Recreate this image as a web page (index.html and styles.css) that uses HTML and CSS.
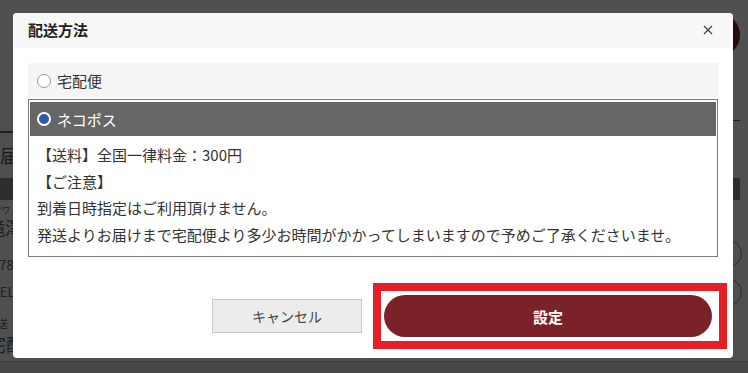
FILE: index.html
```html
<!DOCTYPE html>
<html lang="ja">
<head>
<meta charset="utf-8">
<title>配送方法</title>
<link rel="stylesheet" href="styles.css">
</head>
<body>
<div class="page">
  <div class="page-inner">
    <div class="top-row"><span class="cart-circle"></span></div>
    <div class="section-row">
      <div class="section-left"><h2 class="section-title">お届け先</h2></div>
      <div class="section-right"><span class="short-rule"></span></div>
    </div>
    <div class="section-bar"></div>
    <div class="detail-row">
      <div class="detail-left">
        <p class="kana">カザワ</p>
        <p class="name">滝澤</p>
        <p class="zip">〒178</p>
        <p class="tel">TEL</p>
        <p class="ship-label">配送</p>
        <p class="ship-value">宅配便</p>
      </div>
      <div class="detail-right">
        <span class="round-btn"></span>
        <span class="round-btn"></span>
      </div>
    </div>
  </div>
  <div class="bottom-bar"></div>
</div>

<div class="overlay"></div>

<div class="modal">
  <div class="modal-header">
    <h1 class="modal-title">配送方法</h1>
    <button class="close-btn" aria-label="閉じる">
      <svg width="10" height="10" viewBox="0 0 10 10"><path d="M1 1 L9 9 M9 1 L1 9" stroke="#444" stroke-width="1.3" fill="none"/></svg>
    </button>
  </div>
  <div class="modal-body">
    <label class="option">
      <span class="radio"></span>
      <span class="option-label">宅配便</span>
    </label>
    <div class="option-box">
      <label class="option option-selected">
        <span class="radio radio-checked"></span>
        <span class="option-label">ネコポス</span>
      </label>
      <div class="option-desc">
        <p>【送料】全国一律料金：300円</p>
        <p>【ご注意】</p>
        <p>到着日時指定はご利用頂けません。</p>
        <p>発送よりお届けまで宅配便より多少お時間がかかってしまいますので予めご了承くださいませ。</p>
      </div>
    </div>
  </div>
  <div class="modal-footer">
    <button class="btn-cancel">キャンセル</button>
    <span class="highlight">
      <button class="btn-submit">設定</button>
    </span>
  </div>
</div>
</body>
</html>
```

FILE: styles.css
```css
* { box-sizing: border-box; }
html, body {
  margin: 0;
  padding: 0;
}
body {
  width: 748px;
  height: 373px;
  overflow: hidden;
  position: relative;
  background: #ffffff;
  font-family: "Noto Sans CJK JP", "Noto Sans", sans-serif;
  color: #333;
}
p, h1, h2 { margin: 0; }

/* background page */
.page {
  width: 748px;
  height: 373px;
  overflow: hidden;
  display: flex;
  flex-direction: column;
}
.page-inner {
  width: 760px;
  margin-left: -20px;
  flex: 1;
}
.top-row {
  height: 120px;
  display: flex;
  justify-content: flex-end;
  align-items: flex-start;
  padding-top: 13px;
}
.cart-circle {
  width: 44px;
  height: 44px;
  border-radius: 50%;
  background: #7b2228;
}
.section-row {
  height: 58px;
  display: flex;
  justify-content: space-between;
}
.section-left {
  padding-top: 11px;
  width: 200px;
}
.section-title {
  border-top: 2px solid #666;
  font-size: 18px;
  font-weight: normal;
  line-height: 45px;
  padding-left: 2px;
  color: #555;
}
.section-right {
  width: 20px;
}
.short-rule {
  display: block;
  height: 1px;
  background: #666;
}
.section-bar {
  height: 22px;
  background: #959595;
}
.detail-row {
  display: flex;
  justify-content: space-between;
}
.detail-left {
  padding-left: 6px;
  color: #666;
}
.kana { font-size: 8px; line-height: 9px; margin-top: 5px; }
.name { font-size: 18px; line-height: 22px; padding-left: 1px; margin-top: 2px; }
.zip { font-size: 13px; line-height: 16px; margin-top: 19px; margin-left: -7px; }
.tel { font-size: 13px; line-height: 16px; margin-top: 11px; margin-left: 6px; }
.ship-label { font-size: 11px; line-height: 12px; margin-top: 17px; }
.ship-value { font-size: 18px; line-height: 22px; margin-left: 2px; margin-top: 4px; }
.detail-right {
  display: flex;
  flex-direction: column;
  padding-top: 40px;
  margin-right: -2px;
  gap: 12px;
}
.round-btn {
  width: 27px;
  height: 27px;
  border-radius: 50%;
  border: 1.5px solid #888;
}
.bottom-bar {
  height: 12px;
  background: #e6e6e6;
  border-top: 1px solid #ccc;
  flex: none;
}

/* overlay */
.overlay {
  position: absolute;
  inset: 0;
  background: rgba(0, 0, 0, 0.69);
}

/* modal */
.modal {
  position: absolute;
  left: 13px;
  top: 13px;
  width: 720px;
  height: 345px;
  background: #fff;
  border-radius: 4px;
  overflow: hidden;
  display: flex;
  flex-direction: column;
}
.modal-header {
  height: 35px;
  background: #f7f7f7;
  display: flex;
  align-items: center;
  justify-content: space-between;
  padding: 0 20px 1px 15px;
  flex: none;
}
.modal-title {
  font-size: 15px;
  font-weight: bold;
  color: #222;
  line-height: 20px;
}
.close-btn {
  border: 0;
  background: transparent;
  padding: 0;
  width: 10px;
  height: 10px;
  display: flex;
  align-items: center;
  justify-content: center;
  cursor: pointer;
}
.modal-body {
  padding: 15px 15px 0;
  flex: none;
}
.option {
  height: 35px;
  background: #f5f5f5;
  display: flex;
  align-items: center;
  padding-left: 9px;
  gap: 6px;
  font-size: 15px;
  color: #333;
}
.radio {
  width: 14px;
  height: 14px;
  border-radius: 50%;
  border: 1px solid #9a9a9a;
  background: #fff;
  flex: none;
}
.radio-checked {
  border: 2px solid #fff;
  background: #2a5aa8;
}
.option-box {
  margin-top: 1px;
  border: 1px solid #7a7a7a;
  padding: 2px 1px 0;
}
.option-selected {
  height: 34px;
  background: #666;
  color: #fff;
  padding-left: 7px;
}
.option-desc {
  padding: 6px 7px 8px;
  font-size: 15px;
  line-height: 26.5px;
  color: #333;
}
.modal-footer {
  flex: 1;
  display: flex;
  align-items: center;
  justify-content: flex-end;
  gap: 22px;
  padding: 17px 21px 0 0;
}
.btn-cancel {
  width: 150px;
  height: 34px;
  background: #ececec;
  border: 1px solid #c8c8c8;
  font-family: inherit;
  font-size: 14px;
  color: #444;
  padding: 0;
}
.highlight {
  position: relative;
  display: block;
}
.highlight::after {
  content: "";
  position: absolute;
  top: -12px;
  bottom: -12px;
  left: -11px;
  right: -15px;
  border: 8px solid #e61f27;
  pointer-events: none;
}
.btn-submit {
  display: block;
  width: 328px;
  height: 42px;
  border-radius: 21px;
  border: 0;
  background: #7b2228;
  color: #fff;
  font-family: inherit;
  font-size: 15px;
  font-weight: bold;
  padding: 0;
}
```
